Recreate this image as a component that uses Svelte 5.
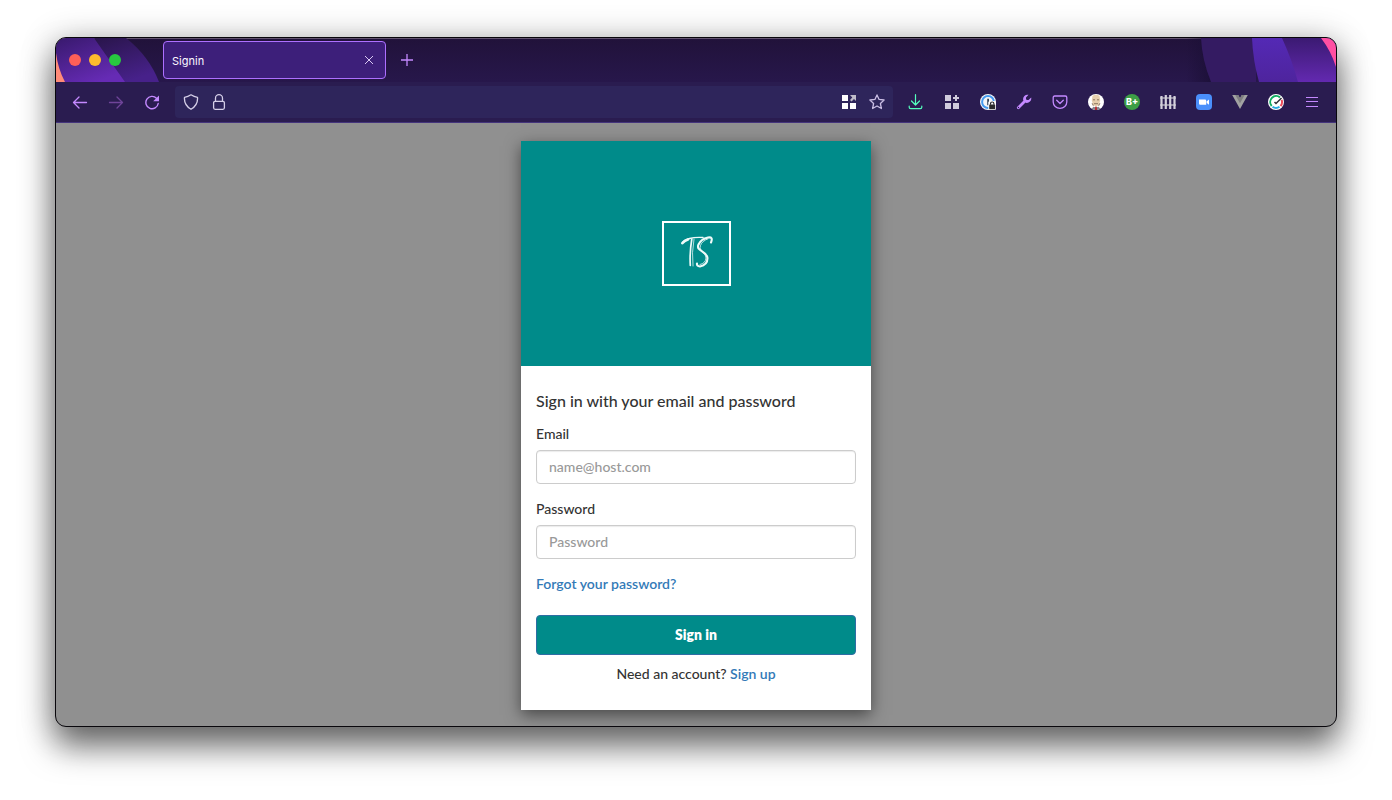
<script>
  let email = $state('');
  let password = $state('');
  let address = $state('');
</script>

<main class="window">
  <header>
    <div class="tabs">
      <svg class="art left" width="106" height="44" viewBox="0 0 106 44" aria-hidden="true">
        <defs>
          <linearGradient id="la" x1="0" y1="0" x2="0.6" y2="1"><stop offset="0" stop-color="#38196d" /><stop offset="1" stop-color="#662bb5" /></linearGradient>
          <linearGradient id="lb" x1="0" y1="0" x2="0.5" y2="1"><stop offset="0" stop-color="#29154a" /><stop offset="1" stop-color="#47218a" /></linearGradient>
        </defs>
        <path d="M38 0H70Q93 18 103 44H60z" fill="url(#lb)" />
        <path d="M0 0H38Q54 23 69 44H0z" fill="url(#la)" />
        <path d="M0 15Q2 31 9 44H0z" fill="#ff8b78" />
      </svg>
      <svg class="art right" width="150" height="44" viewBox="0 0 150 44" aria-hidden="true">
        <defs>
          <linearGradient id="ra"><stop offset="0" stop-color="#1b0f36" stop-opacity="0" /><stop offset="1" stop-color="#1b0f36" /></linearGradient>
          <linearGradient id="rb" x1="0" y1="0" x2="0" y2="1"><stop offset="0" stop-color="#3b1a72" /><stop offset="1" stop-color="#6329b0" /></linearGradient>
          <linearGradient id="rc" x1="0" y1="0" x2="0" y2="1"><stop offset="0" stop-color="#5429b5" /><stop offset="1" stop-color="#4e249d" /></linearGradient>
        </defs>
        <path d="M0 0H30V44H0z" fill="url(#ra)" />
        <path d="M15 0H70V44H25Q16 22 15 0z" fill="#341b62" />
        <path d="M66 0H100L125 44H73Q67 23 66 0z" fill="url(#rc)" />
        <path d="M96 0H150V44H112Q106 22 96 0z" fill="url(#rb)" />
        <path d="M135 0H150V29Q145 13 135 0z" fill="#ff4fa2" />
      </svg>
      <div class="lights"><i class="red"></i><i class="yellow"></i><i class="green"></i></div>
      <div class="tab">
        <span>Signin</span>
        <button aria-label="Close tab"><svg width="10" height="10" viewBox="0 0 10 10"><path d="M1 1l8 8M9 1L1 9" fill="none" stroke="#d9c8f2" stroke-width="1" /></svg></button>
      </div>
      <button class="new" aria-label="New tab"><svg width="12" height="12" viewBox="0 0 12 12"><path d="M6 0v12M0 6h12" fill="none" stroke="#c489ff" stroke-width="1.3" /></svg></button>
    </div>

    <nav class="toolbar" aria-label="Browser">
      <div class="group">
        <button aria-label="Back"><svg viewBox="0 0 16 16"><path d="M14.500 8.500H1.500M7 3L1.500 8.500 7 14" fill="none" stroke="#c489ff" stroke-width="1.300" stroke-linecap="round" stroke-linejoin="round" /></svg></button>
        <button aria-label="Forward" disabled><svg viewBox="0 0 16 16"><path d="M1.500 8.500h13M9 3l5.500 5.500L9 14" fill="none" stroke="#6f4499" stroke-width="1.300" stroke-linecap="round" stroke-linejoin="round" /></svg></button>
        <button aria-label="Reload"><svg viewBox="0 0 16 16"><path d="M12.500 4.200A6.200 6.200 0 1 0 14.200 9.500" fill="none" stroke="#c489ff" stroke-width="1.400" stroke-linecap="round" /><path d="M15 1.500v5.800H9.200z" fill="#c489ff" /></svg></button>
      </div>
      <div class="address">
        <button aria-label="Tracking protection"><svg viewBox="0 0 16 16"><path d="M8 .8Q11 2.800 14.500 3.300Q15.200 11 8 15.300Q.8 11 1.500 3.300Q5 2.800 8 .8z" fill="none" stroke="#d5cfe8" stroke-width="1.300" stroke-linejoin="round" /></svg></button>
        <button aria-label="Connection"><svg viewBox="0 0 16 16"><path d="M4.500 7V4.200a3.500 3.500 0 0 1 7 0V7" fill="none" stroke="#d5cfe8" stroke-width="1.300" /><rect x="2.600" y="7.300" width="10.800" height="8" rx="1.500" fill="none" stroke="#d5cfe8" stroke-width="1.300" /></svg></button>
        <input type="text" aria-label="Address" bind:value={address} />
        <button aria-label="Shortcuts"><svg viewBox="0 0 16 16"><path d="M1 1h6v6H1zM1 9h6v6H1zM9 9h6v6H9z" fill="#fff" /><path d="M9 1h6v6l-2-2-2.500 2.500L9 6l2.300-2.500z" fill="#c0bcc9" /></svg></button>
        <button aria-label="Bookmark"><svg viewBox="0 0 16 16"><path d="M8 .9l2.100 4.500 5 .6-3.700 3.500 1 5L8 12l-4.400 2.500 1-5L.9 6l5-.6z" fill="none" stroke="#c9bde4" stroke-width="1.300" stroke-linejoin="round" /></svg></button>
      </div>
      <div class="group">
        <button aria-label="Downloads"><svg viewBox="0 0 16 16"><path d="M7.500 .7v10.300M3.500 7l4 4 4-4M1.200 12v1.300q0 1.400 1.400 1.400h9.800q1.400 0 1.400-1.400V12" fill="none" stroke="#54ffbd" stroke-width="1.200" stroke-linecap="round" stroke-linejoin="round" /></svg></button>
        <button aria-label="Extensions"><svg viewBox="0 0 16 16"><path d="M1 1h6v6H1zM1 9h6v6H1zM9 9h6v6H9zM11 1h2v2h2v2h-2v2h-2V5H9V3h2z" fill="#d0cbdc" /></svg></button>
        <button aria-label="Password manager"><svg viewBox="0 0 16 16"><circle cx="8" cy="8" r="8" fill="#f4f6f8" /><circle cx="8" cy="8" r="5.900" fill="none" stroke="#459bf0" stroke-width="2" /><path d="M7.200 4.700h1.800v6.600H7.200z" fill="#30445a" /><rect x="8.300" y="7" width="7.700" height="9" rx="1.500" fill="#fff" /><rect x="9.200" y="10.500" width="6" height="4.800" rx=".6" fill="#2b2b2b" /><path d="M10.500 10.800V9.700a1.700 1.700 0 0 1 3.400 0v1.100" fill="none" stroke="#2b2b2b" stroke-width="1.200" /></svg></button>
        <button aria-label="Developer tools"><svg viewBox="0 0 16 16"><path d="M2.300 13.700L9.500 6.500" stroke="#c489ff" stroke-width="2.800" stroke-linecap="round" /><path d="M12.500.8A4.500 4.500 0 0 0 7.200 6.200L9.800 8.800A4.500 4.500 0 0 0 15.200 3.500L12.500 6 10 5.900V3.400z" fill="#c489ff" /><circle cx="2.500" cy="13.500" r=".7" fill="#2a1c50" /></svg></button>
        <button aria-label="Pocket"><svg viewBox="0 0 16 16"><path d="M2.700 2h10.600q1.500 0 1.500 1.500V8a6.800 6.300 0 0 1-13.600 0V3.500Q1.200 2 2.700 2zM4.700 6.300L8 9.500l3.300-3.200" fill="none" stroke="#c489ff" stroke-width="1.300" stroke-linecap="round" stroke-linejoin="round" /></svg></button>
        <button aria-label="Profile"><svg viewBox="0 0 16 16"><circle cx="8" cy="8" r="8" fill="#fff" /><path d="M4.500 1.800Q8-.1 11.500 1.800l.7 4.700-1.200 4L8 13l-3-2.500-1.200-4z" fill="#e6cfad" /><path d="M5 5.800h2M9 5.800h2M6 9.700h4" fill="none" stroke="#8a7560" stroke-width="1" /><path d="M4 9.300l1.500 2.500M12 9.300l-1.500 2.500" stroke="#9b8570" stroke-width="1.100" /><path d="M3.800 14.800l1.500-2L8 13.500l2.700-.7 1.500 2A8 8 0 0 1 3.800 14.800z" fill="#85858c" /><path d="M7.200 12.700h1.600L9 16H7z" fill="#b82932" /></svg></button>
        <button aria-label="Grade B plus"><svg viewBox="0 0 16 16"><circle cx="8" cy="8" r="8" fill="#3d9e46" /><text x="8" y="11.200" text-anchor="middle" font-size="9" font-weight="800" fill="#fff">B+</text></svg></button>
        <button aria-label="Containers"><svg viewBox="0 0 16 16"><path d="M0 4h16M0 11h16" stroke="#aaa6b3" stroke-width="1.300" /><path d="M1.500 2v13M5.800 1v14M10.200 1v14M14.500 2v13" stroke="#d4d0dc" stroke-width="2.200" /></svg></button>
        <button aria-label="Video meeting"><svg viewBox="0 0 16 16"><rect width="16" height="16" rx="4" fill="#4a8ffb" /><path d="M3 5.500h6q1.200 0 1.200 1.200v4H4.200Q3 10.700 3 9.500zM10.700 7.200L13 5.500v5.200L10.700 9z" fill="#fff" /></svg></button>
        <button aria-label="Vue tools"><svg viewBox="0 0 16 16"><path d="M.2 1H6.200L8 4.300 9.800 1h6L8 15z" fill="#a2a2a2" /><path d="M3.300 1h3L8 4.300 9.700 1h3L8 9.200z" fill="#7e7e80" /></svg></button>
        <button aria-label="Speed check"><svg viewBox="0 0 16 16"><circle cx="8" cy="8" r="8" fill="#fff" /><path d="M12 3.400A6 6 0 0 0 3.700 12" fill="none" stroke="#11ac62" stroke-width="2" /><path d="M4.500 12.800A6 6 0 0 0 11.500 12.800" fill="none" stroke="#27a9e1" stroke-width="2" /><path d="M12.500 12A6 6 0 0 0 13.600 5.800" fill="none" stroke="#ed4c5b" stroke-width="2" /><path d="M6.500 8l1.500 1.500L13.500 4" fill="none" stroke="#303238" stroke-width="1.500" /></svg></button>
        <button aria-label="Menu"><svg viewBox="0 0 16 16"><path d="M2 3.500h12M2 7.500h12M2 12.500h12" stroke="#c489ff" stroke-width="1.100" /></svg></button>
      </div>
    </nav>
  </header>

  <section class="page">
    <div class="card">
      <div class="banner">
        <svg width="72" height="65" viewBox="0 0 72 65" role="img" aria-label="TS">
          <rect x="3" y="1" width="67" height="63" fill="none" stroke="#fff" stroke-width="2" />
          <g fill="none" stroke="#eefaf9" stroke-linecap="round">
            <path d="M22 22.500Q24 19 29.500 17.500T43 16.500" stroke-width="1.500" />
            <path d="M22.500 22Q24.500 19.500 28 18.500" stroke-width="2.800" />
            <path d="M31.800 18Q29.500 32 30.300 44.500" stroke-width="1.700" />
            <path d="M34 18Q31.500 32 33 45" stroke-width="1" opacity=".75" />
            <path d="M51 21.500Q53.500 15.500 48 16.500Q41 18 38.500 23.500C35.500 30.500 47 29.500 47.500 37Q47.500 44 40 45.500Q36.500 45 37 42.500" stroke-width="2.100" />
            <path d="M48 17.800Q42 20 40.500 24.500C38.500 30 45.500 31 46 37Q45.500 42.500 40 43.500" stroke-width="1" opacity=".8" />
          </g>
        </svg>
      </div>
      <form onsubmit={(event) => event.preventDefault()}>
        <h1>Sign in with your email and password</h1>
        <div class="field">
          <label for="email">Email</label>
          <input id="email" type="email" placeholder="name@host.com" bind:value={email} />
        </div>
        <div class="field">
          <label for="password">Password</label>
          <input id="password" type="password" placeholder="Password" bind:value={password} />
        </div>
        <a class="forgot" href="#forgot">Forgot your password?</a>
        <button class="submit" type="submit">Sign in</button>
        <p>Need an account? <a href="#signup">Sign up</a></p>
      </form>
    </div>
  </section>
</main>

<style>
  :global(body) { margin: 0; background: #fff; }
  :global(#app) { overflow: hidden; }
  * { box-sizing: border-box; }
  svg { display: block; }
  button { border: 0; padding: 0; background: none; display: grid; place-items: center; font-family: inherit; }
  .window {
    margin: 37px 55px 73px;
    border: 1px solid #09070c;
    border-radius: 11px;
    overflow: hidden;
    background: #909090;
    box-shadow: 0 20px 32px rgba(0, 0, 0, 0.5), 0 4px 34px rgba(0, 0, 0, 0.3);
    font-family: Lato, "Open Sans", sans-serif;
    color: #333;
  }
  .tabs {
    position: relative;
    display: flex;
    align-items: center;
    height: 44px;
    padding-left: 13px;
    background: linear-gradient(#21123a, #27174b);
    box-shadow: inset 0 1px #62536f;
  }
  .art { position: absolute; top: 0; }
  .left { left: 0; }
  .right { right: 0; }
  .lights { position: relative; display: flex; gap: 8px; margin-right: 42px; }
  .lights i { width: 12px; height: 12px; border-radius: 50%; }
  .red { background: #ff5f57; }
  .yellow { background: #febc2e; }
  .green { background: #28c840; }
  .tab {
    display: flex;
    align-items: center;
    justify-content: space-between;
    width: 223px;
    height: 38px;
    padding: 0 8px;
    border: 1px solid #ad70ff;
    border-radius: 4px;
    background: #3d1f7a;
    color: #fbf8ff;
    font: 11px/16px Inter, sans-serif;
  }
  .tab span { padding-top: 2px; }
  .tab button { width: 16px; height: 16px; }
  .new { width: 24px; height: 24px; margin-left: 9px; }
  .toolbar {
    display: flex;
    align-items: center;
    gap: 5px;
    height: 41px;
    padding: 0 6px;
    border-bottom: 1px solid #44347c;
    background: #2a1c50;
  }
  .group { display: flex; }
  .toolbar button { width: 28px; height: 32px; }
  .toolbar .group button { width: 36px; }
  .toolbar svg { width: 16px; height: 16px; }
  .toolbar text { font-family: Inter, sans-serif; }
  .address {
    display: flex;
    flex: 1;
    min-width: 0;
    padding: 0 2px;
    border-radius: 4px;
    background: #2e255b;
  }
  .address input { flex: 1; min-width: 0; border: 0; outline: 0; background: none; color: #fff; }
  .page { padding: 18px 0 16px; }
  .card { width: 350px; margin: 0 auto; background: #fff; box-shadow: 0 5px 15px rgba(0, 0, 0, 0.5); }
  .banner { display: grid; place-items: center; height: 225px; background: #008b8a; }
  form { display: flex; flex-direction: column; padding: 24px 15px 26px; font-size: 14px; font-weight: 500; line-height: 20px; }
  h1 { margin: 0 0 12px; font-size: 16px; line-height: 22px; font-weight: 500; }
  .field { display: flex; flex-direction: column; gap: 6px; margin-bottom: 15px; }
  .field input {
    height: 34px;
    padding: 5px 12px 7px;
    border: 1px solid #ccc;
    border-radius: 4px;
    background: #fff;
    box-shadow: inset 0 1px 1px rgba(0, 0, 0, 0.08);
    color: #555;
    font: 500 14px/20px Lato, sans-serif;
  }
  .field input::placeholder { color: #999; opacity: 1; }
  a { color: #337ab7; text-decoration: none; }
  .forgot { align-self: flex-start; margin-bottom: 21px; font-weight: 600; }
  .submit {
    height: 40px;
    margin-bottom: 9px;
    padding-bottom: 2px;
    border: 1px solid #2e6da4;
    border-radius: 4px;
    background: #008b8a;
    color: #fff;
    font-size: 14px;
    font-weight: 800;
  }
  p { margin: 0; text-align: center; }
  p a { font-weight: 600; }
</style>
